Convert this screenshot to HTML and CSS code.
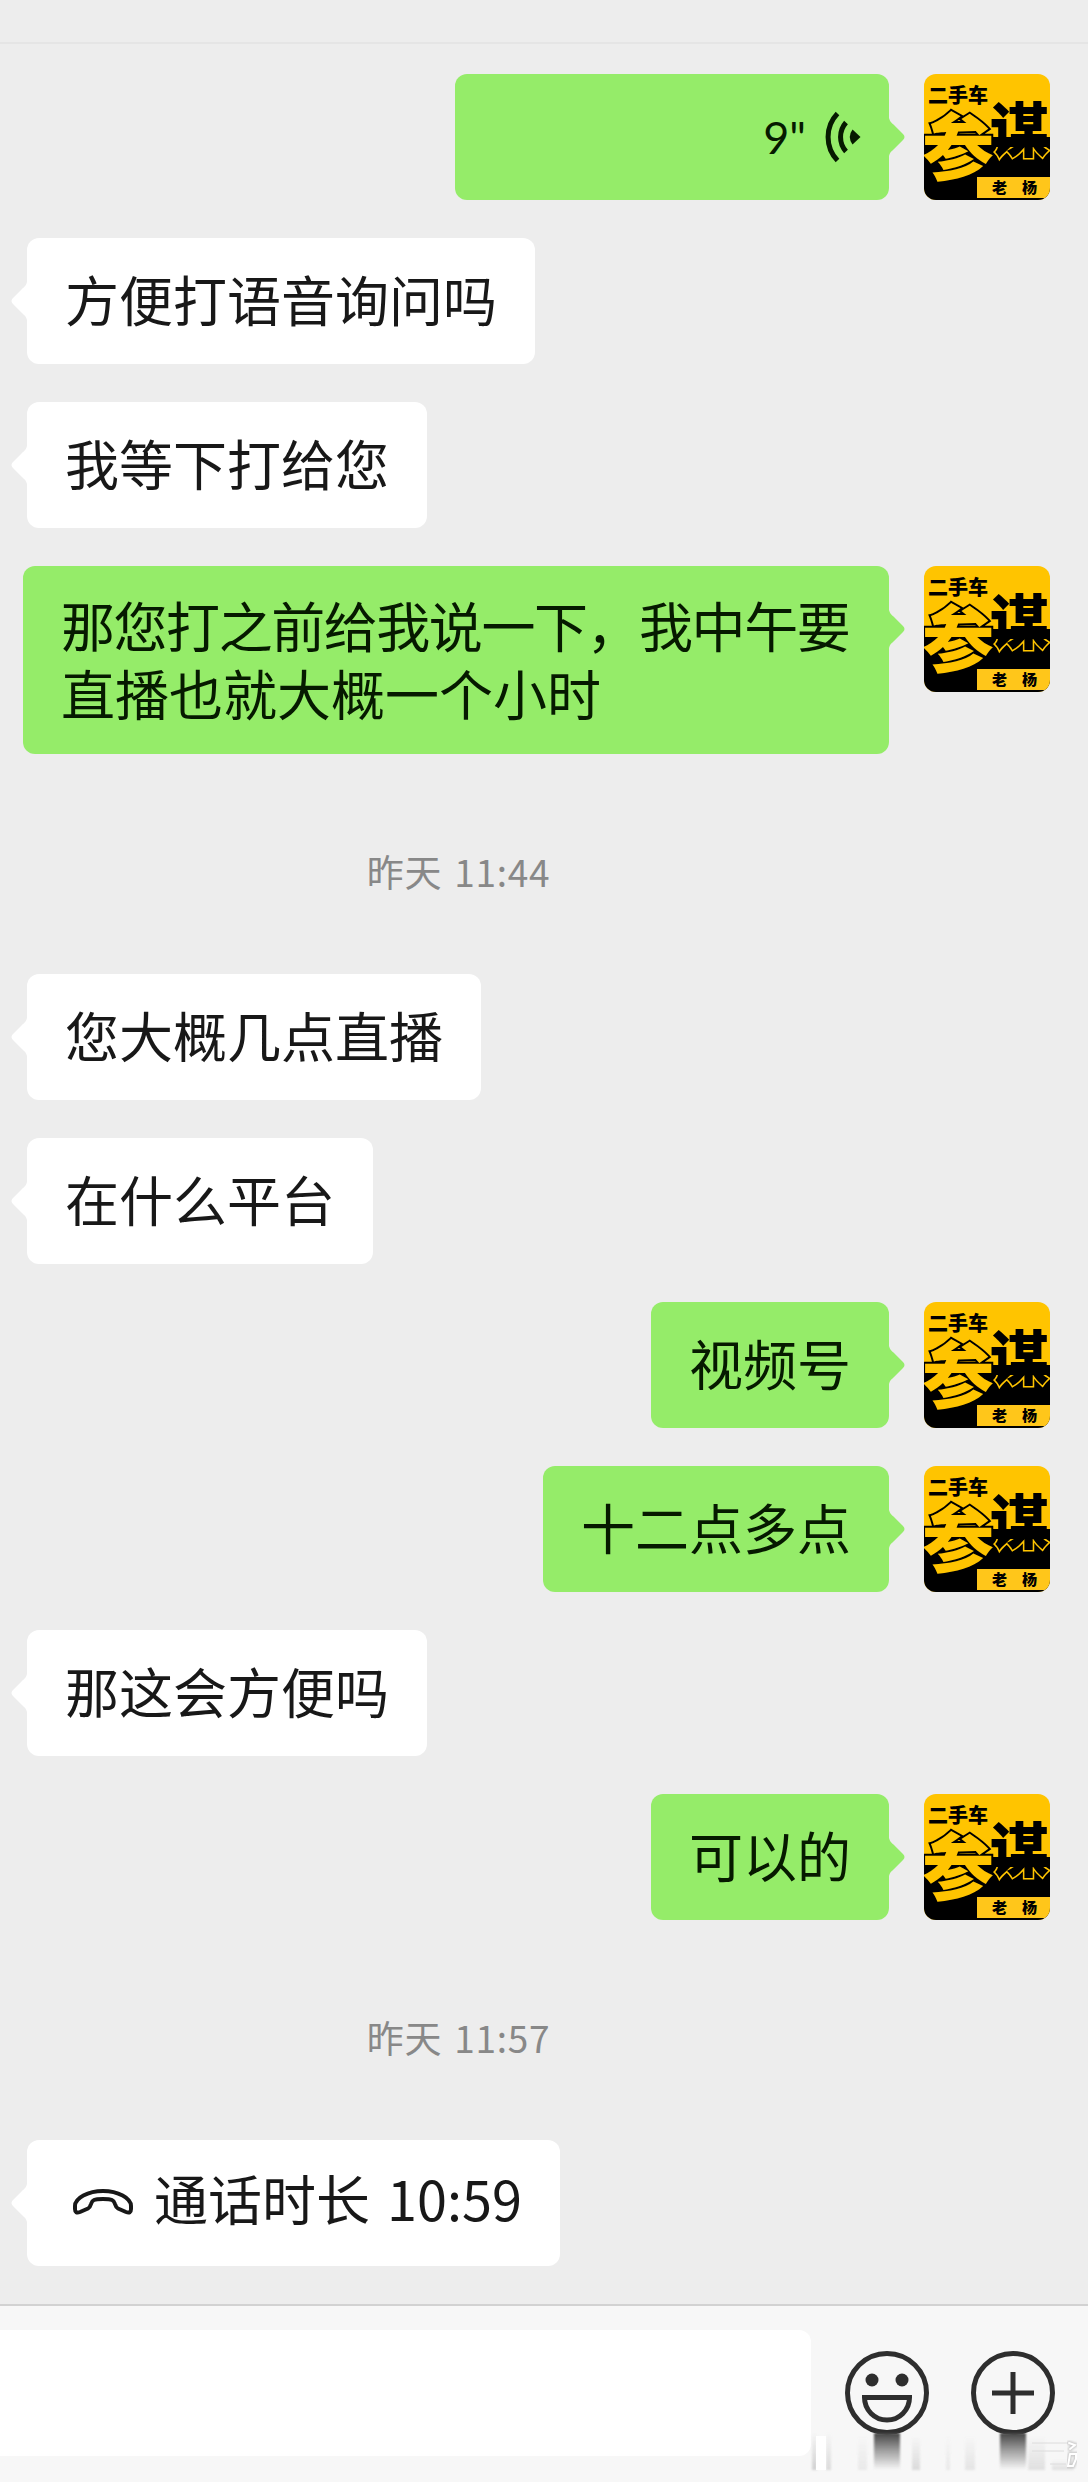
FILE: index.html
```html
<!DOCTYPE html>
<html lang="zh-CN">
<head>
    <meta charset="UTF-8">
    <meta name="viewport" content="width=device-width, initial-scale=1.0">
    <title>聊天</title>
    <link rel="stylesheet" href="styles.css">
</head>
<body>
    <!-- 气泡尖角 -->
    <svg class="defs" width="0" height="0">
        <symbol id="tail" viewBox="0 0 16 38">
            <path d="M0 0C1 4 3 5 5 7L14 16Q17 19 14 22L5 31C3 33 1 34 0 38Z" fill="currentColor"/>
        </symbol>
    </svg>

    <div class="topbar"></div>

    <main class="chat">
        <div class="row me">
            <div class="bubble voice">
                <span class="seconds">9"</span>
                <svg class="voice-icon" viewBox="0 0 38 52">
                    <path d="M13.5 2.5A34 34 0 0 0 13.5 49.5M22 11.5A22 22 0 0 0 22 40.5" fill="none" stroke="#061a00" stroke-width="5"/>
                    <path d="M28.5 18.5L36.5 26L28.5 33.5Q23 26 28.5 18.5Z" fill="#061a00"/>
                </svg>
                <svg class="tail"><use href="#tail"/></svg>
            </div>
            <svg class="avatar" viewBox="0 0 126 126">
                <defs>
                    <linearGradient id="edge" gradientUnits="userSpaceOnUse" x1="0" y1="0" x2="0" y2="126">
                        <stop offset=".58" stop-color="#ffc400" stop-opacity="0"/>
                        <stop offset=".58" stop-color="#ffc400"/>
                    </linearGradient>
                </defs>
                <g id="avatar">
                    <rect width="126" height="126" fill="#ffc400"/>
                    <rect y="63" width="126" height="63" fill="#000"/>
                    <text x="4" y="29" class="logo-small">二手车</text>
                    <text x="-2" y="100" class="logo-big">参</text>
                    <text x="66" y="78" class="logo-right">谋</text>
                    <rect x="53" y="103" width="73" height="21" fill="#ffc61a"/>
                    <text x="68" y="119" class="logo-name">老</text>
                    <text x="98" y="119" class="logo-name">杨</text>
                </g>
            </svg>
        </div>

        <div class="row">
            <div class="bubble"><p>方便打语音询问吗</p><svg class="tail"><use href="#tail"/></svg></div>
        </div>

        <div class="row">
            <div class="bubble"><p>我等下打给您</p><svg class="tail"><use href="#tail"/></svg></div>
        </div>

        <div class="row me">
            <div class="bubble long">
                <p><span class="tight">那您打之前给我说一下，我中午要</span><br>直播也就大概一个小时</p>
                <svg class="tail"><use href="#tail"/></svg>
            </div>
            <svg class="avatar" viewBox="0 0 126 126"><use href="#avatar"/></svg>
        </div>

        <div class="time">昨天 11:44</div>

        <div class="row">
            <div class="bubble"><p>您大概几点直播</p><svg class="tail"><use href="#tail"/></svg></div>
        </div>

        <div class="row">
            <div class="bubble"><p>在什么平台</p><svg class="tail"><use href="#tail"/></svg></div>
        </div>

        <div class="row me">
            <div class="bubble"><p>视频号</p><svg class="tail"><use href="#tail"/></svg></div>
            <svg class="avatar" viewBox="0 0 126 126"><use href="#avatar"/></svg>
        </div>

        <div class="row me">
            <div class="bubble"><p>十二点多点</p><svg class="tail"><use href="#tail"/></svg></div>
            <svg class="avatar" viewBox="0 0 126 126"><use href="#avatar"/></svg>
        </div>

        <div class="row">
            <div class="bubble"><p>那这会方便吗</p><svg class="tail"><use href="#tail"/></svg></div>
        </div>

        <div class="row me">
            <div class="bubble"><p>可以的</p><svg class="tail"><use href="#tail"/></svg></div>
            <svg class="avatar" viewBox="0 0 126 126"><use href="#avatar"/></svg>
        </div>

        <div class="time">昨天 11:57</div>

        <div class="row">
            <div class="bubble call">
                <svg class="phone-icon" viewBox="0 0 60 26">
                    <path d="M2 17C2 9 15 2 30 2S58 9 58 17V20Q58 25 53 23L45 19.500Q43 18.500 42 15C41 11 39 10 30 10S19 11 18 15Q17 18.500 15 19.500L7 23Q2 25 2 20Z" fill="none" stroke="#181818" stroke-width="4" stroke-linejoin="round"/>
                </svg>
                <p>通话时长 10:59</p>
                <svg class="tail"><use href="#tail"/></svg>
            </div>
        </div>
    </main>

    <footer class="inputbar">
        <div class="input"></div>
        <div class="tool">
            <svg class="tool-icon" viewBox="0 0 84 84">
                <circle cx="42" cy="42" r="39.500" fill="none" stroke="#2e2e2e" stroke-width="5"/>
                <circle cx="27" cy="29" r="6.500" fill="#2e2e2e"/>
                <circle cx="57" cy="29" r="6.500" fill="#2e2e2e"/>
                <path d="M19.500 46.500H64.500A22.500 22.500 0 0 1 19.500 46.500Z" fill="none" stroke="#2e2e2e" stroke-width="5"/>
            </svg>
            <span class="drip"></span>
        </div>
        <div class="tool">
            <svg class="tool-icon" viewBox="0 0 84 84">
                <circle cx="42" cy="42" r="39.500" fill="none" stroke="#2e2e2e" stroke-width="5"/>
                <path d="M42 21V63M21 42H63" stroke="#2e2e2e" stroke-width="5"/>
            </svg>
            <span class="drip"></span>
        </div>
        <!-- 右下角的模糊条纹 -->
        <svg class="streaks" viewBox="0 0 288 42">
            <defs>
                <linearGradient id="fade" x1="0" y1="0" x2="0" y2="1">
                    <stop offset="0" stop-color="#999" stop-opacity="0"/>
                    <stop offset="1" stop-color="#999" stop-opacity=".5"/>
                </linearGradient>
                <filter id="soft"><feGaussianBlur stdDeviation="1.200"/></filter>
            </defs>
            <g fill="url(#fade)" filter="url(#soft)">
                <rect x="12" y="0" width="5" height="38" opacity=".8"/>
                <rect x="26" y="0" width="5" height="38" opacity=".6"/>
                <rect x="58" y="4" width="9" height="34" opacity=".3"/>
                <rect x="112" y="4" width="8" height="34" opacity=".6"/>
                <rect x="146" y="4" width="4" height="34" opacity=".3"/>
                <rect x="165" y="4" width="10" height="34" opacity=".4"/>
                <rect x="228" y="4" width="17" height="34" opacity=".5"/>
                <rect x="252" y="28" width="22" height="10" opacity=".5"/>
            </g>
            <rect x="16" y="4" width="10" height="34" fill="#fff"/>
            <g fill="none" stroke="#dcdcdc" stroke-width="1">
                <path d="M232 11H268M232 19H264M250 32H266"/>
            </g>
            <g fill="none" stroke-linecap="round">
                <path d="M269 11L275 13L270 17M270 22H276V27L273 34H268L270 22" stroke="#c4c4c4" stroke-width="4" filter="url(#soft)"/>
                <path d="M269 11L275 13L270 17M270 22H276V27L273 34H268L270 22" stroke="#fff" stroke-width="2"/>
            </g>
        </svg>
    </footer>
</body>
</html>
```
FILE: styles.css
```css
* {
    box-sizing: border-box;
}

body {
    margin: 0;
    width: 1088px;
    height: 2482px;
    display: flex;
    flex-direction: column;
    overflow: hidden;
    background: #ededed;
    font-family: "Noto Sans CJK SC", sans-serif;
    color: #181818;
}

p {
    margin: 0;
}

svg {
    display: block;
    flex-shrink: 0;
}

.defs {
    position: absolute;
}

.topbar {
    height: 44px;
    flex-shrink: 0;
    border-bottom: 2px solid #e5e5e5;
}

.chat {
    flex: 1;
    display: flex;
    flex-direction: column;
    gap: 38px;
    padding: 30px 38px 0 27px;
}

.row {
    display: flex;
    align-items: flex-start;
}

.row.me {
    justify-content: flex-end;
    gap: 35px;
}

/* 气泡 */
.bubble {
    position: relative;
    display: flex;
    min-height: 126px;
    padding: 27px 38px 31px;
    border-radius: 12px;
    background: #fff;
    font-size: 54px;
    line-height: 68px;
    white-space: nowrap;
}

.me .bubble {
    background: #95ec69;
    color: #061a00;
}

.bubble.long {
    width: 866px;
    margin-left: -4px;
    padding-top: 25px;
    padding-bottom: 27px;
}

.tight {
    letter-spacing: -1.45px;
}

.tail {
    position: absolute;
    top: 44px;
    left: -16px;
    width: 16px;
    height: 38px;
    color: #fff;
    transform: scaleX(-1);
}

.me .tail {
    left: auto;
    right: -16px;
    color: #95ec69;
    transform: none;
}

.bubble.voice {
    width: 434px;
    justify-content: flex-end;
    align-items: center;
    gap: 18px;
    padding: 0 27px 0 0;
}

.seconds {
    font-family: Lato, sans-serif;
    font-size: 45px;
}

.voice-icon {
    width: 38px;
    height: 52px;
}

.bubble.call {
    width: 533px;
    padding-left: 46px;
    padding-top: 24px;
    gap: 21px;
    word-spacing: 5px;
}

.phone-icon {
    width: 60px;
    height: 26px;
    margin-top: 25px;
}

.avatar {
    width: 126px;
    height: 126px;
    border-radius: 12px;
}

.logo-small,
.logo-name,
.logo-big,
.logo-right {
    font-family: "Noto Sans CJK SC", sans-serif;
    font-weight: 900;
    fill: #000;
}

.logo-small {
    font-size: 20px;
}

.logo-name {
    font-size: 15px;
}

.logo-big {
    font-size: 72px;
    fill: #ffc400;
    stroke: #000;
    stroke-width: 4px;
    paint-order: stroke;
}

.logo-right {
    font-size: 59px;
    stroke: url(#edge);
    stroke-width: 3px;
    paint-order: stroke;
}

.time {
    width: 863px;
    height: 144px;
    padding-top: 14px;
    line-height: 130px;
    text-align: center;
    font-size: 37px;
    letter-spacing: 0.7px;
    word-spacing: 3px;
    color: #888;
}

/* 底部输入栏 */
.inputbar {
    position: relative;
    display: flex;
    flex-shrink: 0;
    height: 178px;
    padding-top: 24px;
    border-top: 2px solid #d2d2d2;
    background: #f7f7f7;
}

.input {
    width: 811px;
    height: 126px;
    margin-right: 34px;
    flex-shrink: 0;
    border-radius: 0 12px 12px 0;
    background: #fff;
}

.tool {
    position: relative;
    flex-shrink: 0;
    margin: 21px 42px 0 0;
    height: 84px;
}

.tool-icon {
    width: 84px;
    height: 84px;
}

.drip {
    position: absolute;
    left: 29px;
    top: 82px;
    width: 26px;
    height: 36px;
    background: linear-gradient(#444, #999 45%, rgba(230, 230, 230, 0.2));
    filter: blur(1px);
}

.streaks {
    position: absolute;
    left: 800px;
    bottom: 8px;
    width: 288px;
    height: 42px;
}
```
